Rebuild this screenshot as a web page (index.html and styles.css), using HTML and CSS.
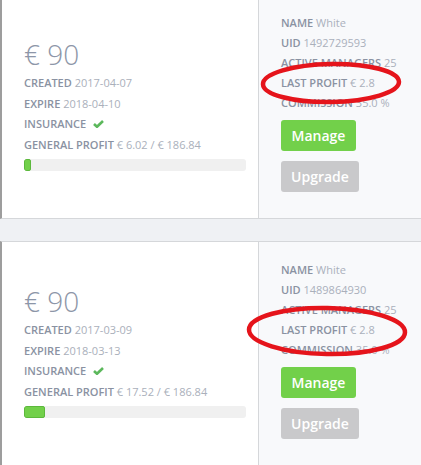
FILE: index.html
```html
<!DOCTYPE html>
<html lang="en">
<head>
    <meta charset="UTF-8">
    <meta name="viewport" content="width=device-width, initial-scale=1.0">
    <title>Packages</title>
    <link rel="stylesheet" href="styles.css">
</head>
<body>
    <div class="list">
        <div class="card">
            <div class="main">
                <div class="amount">&euro; 90</div>
                <div class="row"><b>CREATED</b> 2017-04-07</div>
                <div class="row"><b>EXPIRE</b> 2018-04-10</div>
                <div class="row"><b>INSURANCE</b> <svg class="check" width="11" height="8" viewBox="0 0 11 8"><path d="M1 4 L4 6.8 L10 1" fill="none" stroke="#5cb85c" stroke-width="2.6"/></svg></div>
                <div class="row"><b>GENERAL PROFIT</b> &euro; 6.02 / &euro; 186.84</div>
                <div class="bar"><div class="fill" style="width: 7px"></div></div>
            </div>
            <div class="side">
                <div class="row"><b>NAME</b> White</div>
                <div class="row"><b>UID</b> 1492729593</div>
                <div class="row"><b>ACTIVE MANAGERS</b> 25</div>
                <div class="row"><b>LAST PROFIT</b> &euro; 2.8</div>
                <div class="row"><b>COMMISSION</b> 35.0 %</div>
                <button class="btn manage">Manage</button>
                <button class="btn upgrade">Upgrade</button>
            </div>
        </div>

        <div class="card">
            <div class="main">
                <div class="amount">&euro; 90</div>
                <div class="row"><b>CREATED</b> 2017-03-09</div>
                <div class="row"><b>EXPIRE</b> 2018-03-13</div>
                <div class="row"><b>INSURANCE</b> <svg class="check" width="11" height="8" viewBox="0 0 11 8"><path d="M1 4 L4 6.8 L10 1" fill="none" stroke="#5cb85c" stroke-width="2.6"/></svg></div>
                <div class="row"><b>GENERAL PROFIT</b> &euro; 17.52 / &euro; 186.84</div>
                <div class="bar"><div class="fill" style="width: 21px"></div></div>
            </div>
            <div class="side">
                <div class="row"><b>NAME</b> White</div>
                <div class="row"><b>UID</b> 1489864930</div>
                <div class="row"><b>ACTIVE MANAGERS</b> 25</div>
                <div class="row"><b>LAST PROFIT</b> &euro; 2.8</div>
                <div class="row"><b>COMMISSION</b> 35.0 %</div>
                <button class="btn manage">Manage</button>
                <button class="btn upgrade">Upgrade</button>
            </div>
        </div>
    </div>

    <!-- red marker circles drawn over the screenshot -->
    <svg class="marks" width="421" height="465" viewBox="0 0 421 465">
        <ellipse cx="331" cy="83" rx="68" ry="19" transform="rotate(-1 331 83)" fill="none" stroke="#e5141b" stroke-width="4.5"/>
        <ellipse cx="327" cy="331" rx="78" ry="23" transform="rotate(1 327 331)" fill="none" stroke="#e5141b" stroke-width="4.5"/>
    </svg>
</body>
</html>
```

FILE: styles.css
```css
body {
    margin: 0;
    padding: 0;
    background-color: #eff1f4;
    font-family: "Open Sans", "Liberation Sans", sans-serif;
    overflow: hidden;
    position: relative;
    width: 421px;
    height: 465px;
}

.list {
    margin-top: -6px;
}

.card {
    display: flex;
    height: 223px;
    background-color: #fff;
    border: 1px solid #d5d7da;
    border-left: 2px solid #9d9d9d;
    border-right: none;
    margin-bottom: 22px;
}

.main {
    width: 234px;
    padding: 42px 0 0 22px;
}

.side {
    flex: 1;
    background-color: #f8f9fb;
    border-left: 1px solid #d5d7da;
    padding: 18px 0 0 22px;
    display: flex;
    flex-direction: column;
    align-items: flex-start;
}

.amount {
    font-size: 28px;
    font-weight: 300;
    line-height: 34px;
    color: #8d96a8;
    margin-bottom: 2px;
}

.row {
    font-size: 11px;
    line-height: 20.5px;
    color: #aab0bb;
    white-space: nowrap;
}

.side .row {
    line-height: 20px;
}

.row b {
    font-weight: 600;
    color: #8a92a2;
}

.check {
    margin-left: 4px;
    vertical-align: 0;
}

.bar {
    margin-top: 4px;
    width: 222px;
    height: 12px;
    background-color: #f0f0f0;
    border-radius: 3px;
    overflow: hidden;
}

.fill {
    height: 100%;
    box-sizing: border-box;
    background-color: #72d04a;
    border: 1px solid #5cb83c;
    border-radius: 2px;
}

.btn {
    font-family: "Open Sans", "Liberation Sans", sans-serif;
    font-size: 14px;
    font-weight: 600;
    color: #fff;
    border: none;
    border-radius: 3px;
    height: 31px;
    padding: 0;
    cursor: pointer;
}

.manage {
    width: 75px;
    margin-top: 7px;
    background-color: #72d04a;
}

.upgrade {
    width: 78px;
    margin-top: 10px;
    background-color: #c9c9cb;
}

.marks {
    position: absolute;
    left: 0;
    top: 0;
    pointer-events: none;
}
```
